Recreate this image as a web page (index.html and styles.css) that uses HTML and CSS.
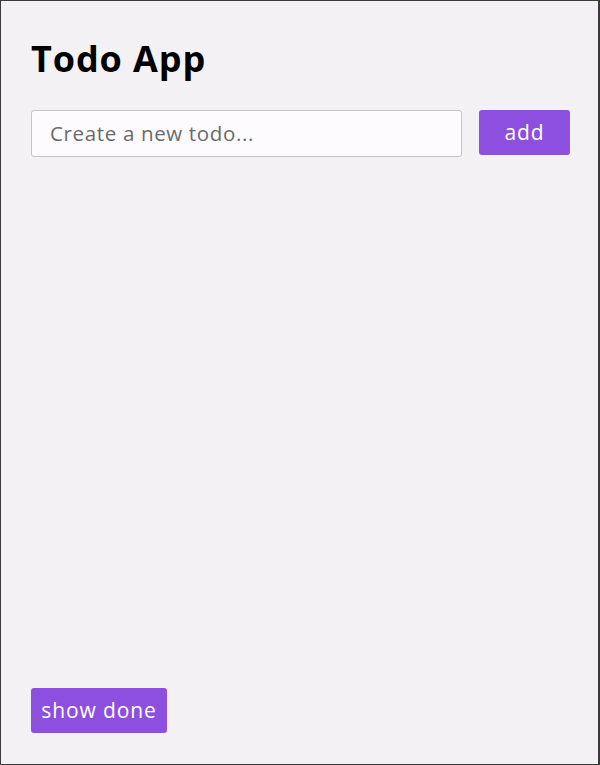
FILE: index.html
```html
<!DOCTYPE html>
<html lang="en">
<head>
<meta charset="utf-8">
<title>Todo App</title>
<link rel="stylesheet" href="styles.css">
</head>
<body>
<main class="app">
  <h1 class="title">Todo App</h1>
  <form class="new-todo">
    <input class="todo-input" type="text" placeholder="Create a new todo...">
    <button class="btn add-btn" type="button">add</button>
  </form>
  <ul class="todo-list"></ul>
  <div class="footer">
    <button class="btn show-btn" type="button">show done</button>
  </div>
</main>
</body>
</html>
```
FILE: styles.css
```css
* { box-sizing: border-box; }
html, body { margin: 0; height: 100%; }
body {
  background: #f3f1f3;
  font-family: "Open Sans", "Noto Sans", sans-serif;
  color: #000;
}
.app {
  height: 765px;
  border: 1px solid #3a3a3a;
  border-right-width: 2px;
  display: flex;
  flex-direction: column;
  padding: 30px 28px 31px 30px;
}
.title {
  margin: 0;
  font-size: 36px;
  font-weight: 700;
  line-height: 56px;
  letter-spacing: 0.9px;
}
.new-todo {
  display: flex;
  align-items: flex-start;
  gap: 17px;
  margin-top: 23px;
}
.todo-input {
  flex: 0 0 431px;
  height: 47px;
  border: 1px solid #c6c4c6;
  border-radius: 3px;
  background: #fdfbfe;
  padding: 0 18px 2px;
  font-family: inherit;
  font-size: 20.5px;
  letter-spacing: 0.65px;
  color: #333;
}
.todo-input::placeholder { color: #6a6a6a; }
.btn {
  background: #8c4fe0;
  color: #fff;
  border: none;
  border-radius: 3px;
  font-family: inherit;
  font-size: 21px;
  letter-spacing: 0.9px;
  height: 45px;
  padding: 0 0 1px;
}
.add-btn { flex: 0 0 91px; }
.todo-list {
  flex: 1;
  margin: 0;
  padding: 0;
  list-style: none;
}
.show-btn { width: 136px; }
```
